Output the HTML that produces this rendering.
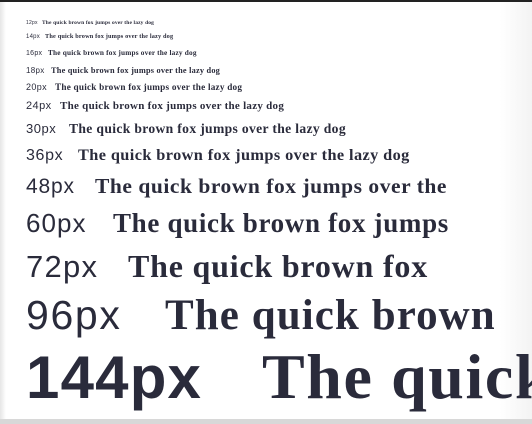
<!DOCTYPE html>
<html><head><meta charset="utf-8"><style>
html,body{margin:0;padding:0}
body{width:532px;height:424px;position:relative;overflow:hidden;background:#fff;
background:linear-gradient(to right,#e6e6e6 0,#fff 6px,#fff 500px,#f3f3f3 532px);}
.top{position:absolute;left:0;top:0;width:532px;height:2px;background:#222}
.bot{position:absolute;left:0;top:419px;width:532px;height:5px;background:#d8d8d8}
.r{position:absolute;left:26px;white-space:nowrap;color:#2a2b3b;line-height:1}
.l{font-family:"Liberation Sans",sans-serif;display:inline-block;letter-spacing:0.04em}
.s{font-family:"Liberation Serif",serif;font-weight:bold;letter-spacing:0.025em}
</style></head><body>
<div class="top"></div>
<div class="r" style="top:12px"><span class="l" style="font-size:5px;width:16px">12px</span><span class="s" style="font-size:5.5px">The quick brown fox jumps over the lazy dog</span></div>
<div class="r" style="top:26px"><span class="l" style="font-size:6px;width:19px">14px</span><span class="s" style="font-size:6.3px">The quick brown fox jumps over the lazy dog</span></div>
<div class="r" style="top:43px"><span class="l" style="font-size:7px;width:22px">16px</span><span class="s" style="font-size:7.3px">The quick brown fox jumps over the lazy dog</span></div>
<div class="r" style="top:61px"><span class="l" style="font-size:8px;width:25px">18px</span><span class="s" style="font-size:8.3px">The quick brown fox jumps over the lazy dog</span></div>
<div class="r" style="top:78px"><span class="l" style="font-size:9px;width:29px">20px</span><span class="s" style="font-size:9.2px">The quick brown fox jumps over the lazy dog</span></div>
<div class="r" style="top:97px"><span class="l" style="font-size:11px;width:34px">24px</span><span class="s" style="font-size:11px">The quick brown fox jumps over the lazy dog</span></div>
<div class="r" style="top:121px"><span class="l" style="font-size:13px;width:43px">30px</span><span class="s" style="font-size:13.6px">The quick brown fox jumps over the lazy dog</span></div>
<div class="r" style="top:147px"><span class="l" style="font-size:16px;width:52px">36px</span><span class="s" style="font-size:16.3px">The quick brown fox jumps over the lazy dog</span></div>
<div class="r" style="top:176px"><span class="l" style="font-size:21px;width:69px">48px</span><span class="s" style="font-size:21.5px">The quick brown fox jumps over the</span></div>
<div class="r" style="top:210px"><span class="l" style="font-size:26px;width:87px">60px</span><span class="s" style="font-size:27px">The quick brown fox jumps</span></div>
<div class="r" style="top:250px"><span class="l" style="font-size:31px;width:102px">72px</span><span class="s" style="font-size:32px">The quick brown fox</span></div>
<div class="r" style="top:294px"><span class="l" style="font-size:41px;width:139px">96px</span><span class="s" style="font-size:43px">The quick brown</span></div>
<div class="r" style="top:345px"><span class="l" style="font-size:60px;font-weight:bold;width:236px;letter-spacing:0.02em">144px</span><span class="s" style="font-size:64px">The quick</span></div>
<div class="bot"></div>
</body></html>
